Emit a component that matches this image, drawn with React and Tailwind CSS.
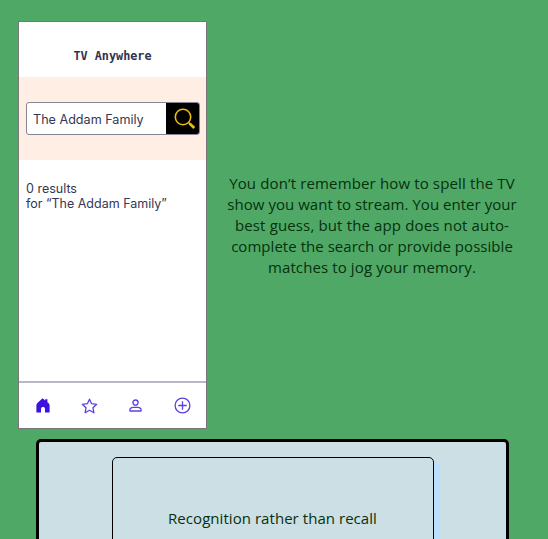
import React from "react";

const lines = [
  { text: "You don’t remember how to spell the TV", style: "tracking-[0.14px]" },
  { text: "show you want to stream. You enter your", style: "tracking-[0.03px]" },
  { text: "best guess, but the app does not auto-", style: "tracking-[0.14px]" },
  { text: "complete the search or provide possible", style: "tracking-[0.04px]" },
  { text: "matches to jog your memory.", style: "tracking-[0.11px]" },
];

function SearchIcon() {
  return (
    <svg width="22" height="22" viewBox="0 0 22 22" fill="none" stroke="#e9bd0b">
      <circle cx="9" cy="9" r="7.7" strokeWidth="1.6" />
      <path d="M14.3 14.3 16 16" strokeWidth="1.5" />
      <path d="m15.6 15.6 4.7 4.5" strokeWidth="2.8" />
    </svg>
  );
}

function HomeIcon() {
  return (
    <svg width="14" height="15" viewBox="0 0 14 15" fill="#3d12df">
      <path d="M6.6.3 9.2 2.5V1.2h2.2v3l1.5 1.3.7 1.6V14.4H9v-3.5c0-2.6-4-2.6-4 0v3.5H.4V6.7L1.4 5Z" />
    </svg>
  );
}

function StarIcon() {
  return (
    <svg width="17" height="16" viewBox="0 0 17 16" fill="none" stroke="#5b3fe6" strokeWidth="1.3" strokeLinejoin="round">
      <path d="m8.5 1.2 2.1 4.5 5.1.6-3.7 3.5.9 5-4.4-2.5-4.4 2.5.9-5-3.7-3.5 5.1-.6Z" />
    </svg>
  );
}

function PersonIcon() {
  return (
    <svg width="13" height="13" viewBox="0 0 13 13" fill="none" stroke="#5b3fe6" strokeWidth="1.3">
      <circle cx="6.5" cy="3.6" r="2.6" />
      <path d="M1 12c-.6-2.4 1.2-3.7 3.3-3.7h4.4c2.1 0 3.9 1.3 3.3 3.7Z" strokeLinejoin="round" />
    </svg>
  );
}

function AddIcon() {
  return (
    <svg width="17" height="17" viewBox="0 0 17 17" fill="none" stroke="#5b3fe6" strokeWidth="1.3">
      <circle cx="8.5" cy="8.5" r="7.4" />
      <path d="M8.5 4.3v8.4M4.3 8.5h8.4" />
    </svg>
  );
}

function Phone() {
  return (
    <div className="flex h-[408px] w-[189px] shrink-0 flex-col border border-[#777] bg-white text-[#343853]">
      <div className="flex h-[55px] shrink-0 justify-center pt-[26px] font-['DejaVu_Sans_Mono',monospace] text-[11.8px] leading-4 font-bold whitespace-nowrap text-[#30334d]">
        TV Anywhere
      </div>
      <div className="h-[83px] shrink-0 bg-[#ffeee4] pt-[25px] pl-[7px]">
        <div className="flex h-[33px] w-[174px] overflow-hidden rounded-[3px] border border-[#858594] bg-white">
          <div className="flex-1 pl-[6px] font-[Inter,sans-serif] text-[12.6px] leading-[33px] whitespace-nowrap">
            The Addam Family
          </div>
          <div className="-my-px -mr-px flex w-[34px] items-center justify-center bg-black pl-[4px]">
            <SearchIcon />
          </div>
        </div>
      </div>
      <div className="flex-1 pt-[21px] pl-[7px] font-[Inter,sans-serif] text-[12.5px] leading-[15px] whitespace-nowrap">
        <div>0 results</div>
        <div>for “The Addam Family”</div>
      </div>
      <div className="grid h-[47px] shrink-0 grid-cols-4 items-center justify-items-center border-t-2 border-[#b6b9c5]">
        <div className="pl-[2px]">
          <HomeIcon />
        </div>
        <StarIcon />
        <PersonIcon />
        <AddIcon />
      </div>
    </div>
  );
}

export default function App() {
  return (
    <div className="h-[539px] overflow-hidden bg-[#4fa866] pt-[21px] font-['Open_Sans','Noto_Sans',sans-serif] text-[15px] leading-[21px] text-[#06310d]">
      <div className="flex h-[418px] pl-[18px]">
        <Phone />
        <div className="ml-[15px] flex w-[300px] flex-col items-center pt-[152px]">
          {lines.map((line) => (
            <div key={line.text} className={"whitespace-nowrap " + line.style}>
              {line.text}
            </div>
          ))}
        </div>
      </div>
      <div className="ml-[36px] flex h-[140px] w-[473px] justify-center rounded-[5px] border-[3px] border-black bg-[#ccdfe4] pt-[15px]">
        <div className="flex h-[140px] w-[322px] justify-center rounded-[5px] border border-black bg-[#ccdfe4] pt-[50px] tracking-[0.05px] whitespace-nowrap shadow-[6px_5px_0_0_#b9e0ff]">
          Recognition rather than recall
        </div>
      </div>
    </div>
  );
}
